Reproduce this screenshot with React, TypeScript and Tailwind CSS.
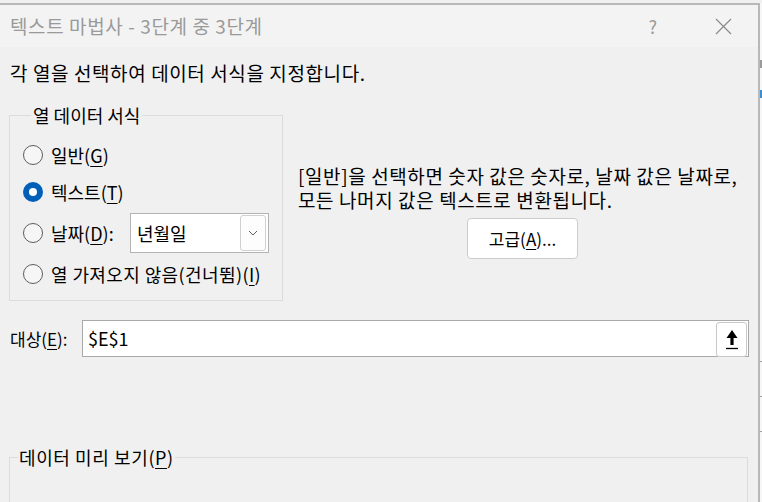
import React from "react";

function Radio({ checked }: { checked?: boolean }) {
  if (checked) {
    return (
      <span className="w-[20px] h-[20px] rounded-full bg-[#005fb8] flex items-center justify-center shrink-0">
        <span className="w-[8px] h-[8px] rounded-full bg-white" />
      </span>
    );
  }
  return (
    <span className="w-[20px] h-[20px] rounded-full border border-[#5c5c5c] bg-[#f6f6f6] shrink-0" />
  );
}

function Key({ k }: { k: string }) {
  return <span className="underline underline-offset-[3px] decoration-1">{k}</span>;
}

export default function App() {
  return (
    <div className="w-[762px] h-[502px] overflow-hidden bg-[#f0f0f0] pt-[3px] flex font-['Noto_Sans_CJK_KR',sans-serif] text-black">
      <div className="w-[760px] h-[499px] flex flex-col border-t-[2px] border-r-[2px] border-[#b8b8b8] bg-[#f0f0f0]">
        {/* title bar */}
        <div className="h-[42px] shrink-0 bg-[#f3f3f3] flex items-center pl-[10px] text-[19px] tracking-[0.6px] leading-[24px] text-[#9a9a9a]">
          <span>텍스트 마법사 - 3단계 중 3단계</span>
          <span className="ml-auto w-[20px] text-center text-[18px] text-[#9a9a9a]">?</span>
          <svg className="ml-[52px] mr-[26px]" width="17" height="17" viewBox="0 0 17 17">
            <path d="M1 1L16 16M16 1L1 16" stroke="#8a8a8a" strokeWidth="1.2" fill="none" />
          </svg>
        </div>

        {/* body */}
        <div className="flex-1 flex flex-col pl-[9px] pr-[9px] pt-[14px]">
          <div className="pl-[1px] text-[19px] tracking-[0.6px] leading-[24px] whitespace-nowrap">
            각 열을 선택하여 데이터 서식을 지정합니다.
          </div>

          <div className="flex items-start mt-[18px]">
            <fieldset className="w-[274px] shrink-0 border border-[#dcdcdc] pl-[13px] pt-[11px] pb-[6px]">
              <legend className="ml-[8px] px-[2px] text-[18px] leading-[24px]">열 데이터 서식</legend>
              <div className="h-[34px] flex items-center gap-[8px] text-[18px]">
                <Radio />
                <span>
                  일반(<Key k="G" />)
                </span>
              </div>
              <div className="h-[40px] flex items-center gap-[8px] text-[18px]">
                <Radio checked />
                <span>
                  텍스트(<Key k="T" />)
                </span>
              </div>
              <div className="h-[42px] flex items-center text-[18px]">
                <Radio />
                <span className="ml-[8px] w-[79px]">
                  날짜(<Key k="D" />):
                </span>
                <div className="w-[139px] h-[40px] bg-white border border-[#b3b3b3] flex items-center pl-[6px] pr-[2px]">
                  <span className="flex-1">년월일</span>
                  <span className="w-[26px] h-[36px] border border-[#d0d0d0] rounded-[3px] bg-[#fdfdfd] flex items-center justify-center">
                    <svg width="10" height="6" viewBox="0 0 10 6">
                      <path d="M1 1L5 5L9 1" stroke="#606060" strokeWidth="1" fill="none" />
                    </svg>
                  </span>
                </div>
              </div>
              <div className="h-[40px] flex items-center gap-[8px] text-[18px] tracking-[0.4px] whitespace-nowrap">
                <Radio />
                <span>
                  열 가져오지 않음(건너뜀)(<Key k="I" />)
                </span>
              </div>
            </fieldset>

            <div className="ml-[15px] mt-[61px] flex flex-col">
              <div className="text-[19px] tracking-[0.6px] leading-[24px] whitespace-nowrap">
                [일반]을 선택하면 숫자 값은 숫자로, 날짜 값은 날짜로,
              </div>
              <div className="text-[19px] tracking-[0.6px] leading-[24px] whitespace-nowrap">
                모든 나머지 값은 텍스트로 변환됩니다.
              </div>
              <button className="ml-[169px] mt-[6px] w-[111px] h-[41px] bg-white border border-[#cccccc] rounded-[4px] text-[17px] flex items-center justify-center">
                고급(<Key k="A" />)...
              </button>
            </div>
          </div>

          <div className="flex items-center mt-[19px]">
            <span className="w-[73px] pl-[1px] text-[17px] whitespace-nowrap">
              대상(<Key k="E" />):
            </span>
            <div className="flex-1 h-[37px] bg-white border border-[#a9a9a9] flex items-start">
              <span className="flex-1 pl-[5px] text-[18px] leading-[35px]">$E$1</span>
              <span className="mt-[1px] mr-[1px] w-[31px] h-[35px] border border-[#c8c8c8] rounded-[3px] bg-white flex items-center justify-center">
                <svg width="14" height="22" viewBox="0 0 14 22">
                  <path d="M7 1L12.5 9H8.6V16H5.4V9H1.5Z" fill="#000" />
                  <path d="M1 19.5H13" stroke="#000" strokeWidth="1.3" />
                </svg>
              </span>
            </div>
          </div>

          <fieldset className="mt-[88px] mr-[1px] h-[80px] border border-[#dcdcdc]">
            <legend className="ml-[8px] px-[1px] text-[18px] tracking-[0.6px] leading-[24px]">
              데이터 미리 보기(<Key k="P" />)
            </legend>
          </fieldset>
        </div>
      </div>
      <div className="flex-1 bg-[#f7f7f7] flex flex-col">
        <div className="h-[57px]" />
        <div className="h-[8px] bg-[#9a9a9a]" />
        <div className="h-[22px]" />
        <div className="h-[8px] bg-[#3b8fd0]" />
        <div className="h-[263px]" />
        <div className="h-[1px] bg-[#a0a0a0]" />
        <div className="h-[34px]" />
        <div className="h-[1px] bg-[#a0a0a0]" />
        <div className="h-[34px]" />
        <div className="h-[1px] bg-[#a0a0a0]" />
      </div>
    </div>
  );
}
